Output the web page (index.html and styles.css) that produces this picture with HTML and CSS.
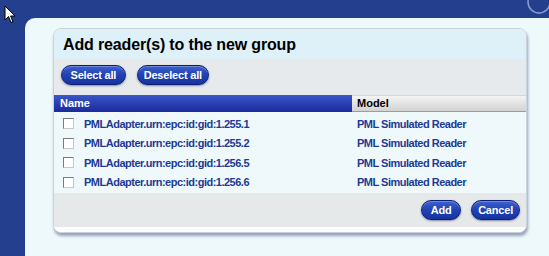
FILE: index.html
```html
<!DOCTYPE html>
<html>
<head>
<meta charset="utf-8">
<link rel="stylesheet" href="styles.css">
</head>
<body>
<svg class="cursor" width="12" height="19" viewBox="0 0 12 19"><path d="M1 1 L1 15 L4.5 11.5 L7 17.5 L9 16.6 L6.6 11 L11 11 Z" fill="#fff" stroke="#000" stroke-width="1"/></svg>
<svg class="ring" width="24" height="18" viewBox="0 0 24 18"><circle cx="14" cy="2" r="11" fill="none" stroke="#b8c8e8" stroke-width="1.5" opacity="0.7"/></svg>
<div class="page">
  <div class="panel">
    <div class="dialog">
      <div class="title">Add reader(s) to the new group</div>
      <div class="toolbar">
        <button class="btn btn-wide">Select all</button>
        <button class="btn">Deselect all</button>
      </div>
      <div class="thead">
        <div class="th th-name">Name</div>
        <div class="th th-model">Model</div>
      </div>
      <div class="tbody">
        <div class="row"><div class="cell-name"><span class="cb"></span>PMLAdapter.urn:epc:id:gid:1.255.1</div><div class="cell-model">PML Simulated Reader</div></div>
        <div class="row"><div class="cell-name"><span class="cb"></span>PMLAdapter.urn:epc:id:gid:1.255.2</div><div class="cell-model">PML Simulated Reader</div></div>
        <div class="row"><div class="cell-name"><span class="cb"></span>PMLAdapter.urn:epc:id:gid:1.256.5</div><div class="cell-model">PML Simulated Reader</div></div>
        <div class="row"><div class="cell-name"><span class="cb"></span>PMLAdapter.urn:epc:id:gid:1.256.6</div><div class="cell-model">PML Simulated Reader</div></div>
      </div>
      <div class="footer">
        <button class="btn btn-wide">Add</button>
        <button class="btn">Cancel</button>
      </div>
      <div class="bottom"></div>
    </div>
  </div>
</div>
</body>
</html>
```
FILE: styles.css
```css
html, body {
  margin: 0;
  padding: 0;
  width: 549px;
  height: 256px;
  overflow: hidden;
}
body {
  background: #233f8e;
  font-family: "Liberation Sans", Arial, sans-serif;
  position: relative;
}
.cursor {
  position: absolute;
  left: 4px;
  top: 5px;
}
.ring {
  position: absolute;
  left: 525px;
  top: 0;
}
.page {
  padding: 18px 0 0 25px;
  height: 238px;
}
.panel {
  background: #eef9fc;
  border-top-left-radius: 10px;
  height: 238px;
  padding: 10px 0 0 28px;
  box-sizing: border-box;
}
.dialog {
  width: 474px;
  border: 1px solid #c9d3db;
  border-radius: 8px;
  box-sizing: border-box;
  overflow: hidden;
  box-shadow: 1px 3px 3px rgba(90, 90, 130, 0.55);
  background: #fff;
}
.title {
  height: 30px;
  background: #def1f8;
  font-weight: bold;
  font-size: 16px;
  color: #000;
  padding-left: 9px;
  line-height: 32px;
  box-sizing: border-box;
  letter-spacing: -0.15px;
}
.toolbar {
  height: 36px;
  background: #e6eaec;
  display: flex;
  gap: 11px;
  padding: 6px 0 0 7px;
  box-sizing: border-box;
}
.btn {
  height: 20px;
  border: 1px solid #0c1f78;
  border-radius: 10px;
  background: linear-gradient(#3f63d0 0%, #2344b4 45%, #1633a0 100%);
  color: #fff;
  font-family: "Liberation Sans", Arial, sans-serif;
  font-weight: bold;
  font-size: 11px;
  padding: 0 6px;
  line-height: 18px;
  box-shadow: 0 1px 2px rgba(40, 40, 80, 0.5), inset 0 1px 0 rgba(255,255,255,0.25);
  letter-spacing: -0.2px;
}
.btn-wide {
  padding: 0 8.5px;
}
.thead {
  height: 17px;
  display: flex;
}
.th {
  font-weight: bold;
  font-size: 11px;
  line-height: 17px;
  box-sizing: border-box;
}
.th-name {
  width: 298px;
  background: linear-gradient(#3b55c8, #1b2a9c);
  color: #fff;
  padding-left: 6px;
}
.th-model {
  flex: 1;
  background: linear-gradient(#f4f4f4, #d2d2d2);
  border-top: 1px solid #d8d8d8;
  border-bottom: 1px solid #9c9c9c;
  color: #000;
  padding-left: 5px;
  line-height: 15px;
}
.tbody {
  background: #eff9fc;
  padding-top: 2px;
  height: 81px;
  box-sizing: border-box;
}
.row {
  height: 19.5px;
  display: flex;
  align-items: center;
  font-weight: bold;
  font-size: 11px;
  color: #1d3a94;
}
.cell-name {
  width: 298px;
  display: flex;
  align-items: center;
  padding-left: 9px;
  box-sizing: border-box;
  letter-spacing: -0.5px;
}
.cb {
  width: 9px;
  height: 9px;
  border: 1px solid #7a7a7a;
  border-right-color: #c8c8c8;
  border-bottom-color: #c8c8c8;
  background: #fff;
  margin-right: 10px;
}
.cell-model {
  padding-left: 5px;
  letter-spacing: -0.5px;
}
.footer {
  height: 34px;
  background: #e6e9ea;
  display: flex;
  justify-content: flex-end;
  gap: 10px;
  padding: 7px 6px 0 0;
  box-sizing: border-box;
}
.bottom {
  height: 5px;
  background: #fff;
}
```
